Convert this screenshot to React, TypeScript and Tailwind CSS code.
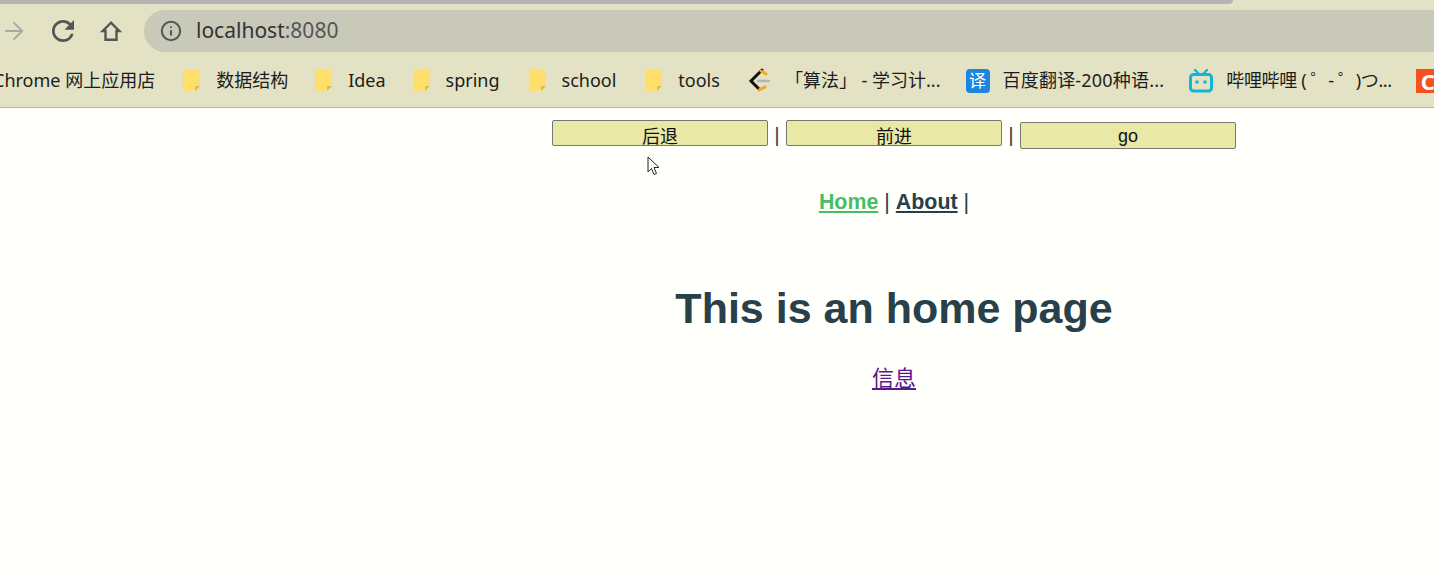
import { ArrowRight, Info } from "lucide-react";

const sans = "font-['Noto_Sans','Noto_Sans_CJK_SC',sans-serif]";
const cjk = "font-['Liberation_Sans','Noto_Sans_CJK_SC',sans-serif]";

function Folder() {
  return (
    <svg width="17" height="21" viewBox="0 0 17 21" className="shrink-0">
      <path d="M1 0h15a1 1 0 0 1 1 1v15l-5 5H1a1 1 0 0 1-1-1V1a1 1 0 0 1 1-1z" fill="#ffdf6c" />
      <path d="M17 16l-5 5v-4a1 1 0 0 1 1-1z" fill="#d9bb55" />
    </svg>
  );
}

function LeetcodeIcon() {
  return (
    <svg width="22" height="26" viewBox="0 0 22 26" className="shrink-0">
      <path d="M14 2L3 13l8 8" fill="none" stroke="#111" strokeWidth="3" strokeLinecap="round" />
      <path d="M13 3l5 3M11 22l6-3" fill="none" stroke="#f5a623" strokeWidth="3" strokeLinecap="round" />
      <path d="M10 13h11" stroke="#b5b5b5" strokeWidth="2.5" strokeLinecap="round" />
    </svg>
  );
}

function BilibiliIcon() {
  return (
    <svg width="24" height="24" viewBox="0 0 24 24" className="shrink-0">
      <path d="M6 1l4 4M18 1l-4 4" stroke="#12b5d6" strokeWidth="2.4" strokeLinecap="round" />
      <rect x="1.5" y="5.5" width="21" height="16.5" rx="3" fill="none" stroke="#12b5d6" strokeWidth="3" />
      <circle cx="8" cy="13" r="1.8" fill="#12b5d6" />
      <circle cx="16" cy="13" r="1.8" fill="#12b5d6" />
    </svg>
  );
}

function Bookmark({
  label,
  icon,
  className,
  textClass = "",
}: {
  label: string;
  icon: React.ReactNode;
  className: string;
  textClass?: string;
}) {
  return (
    <div className={`flex shrink-0 items-center ${className}`}>
      {icon}
      <span className={`whitespace-nowrap text-[18px] text-[#1c1c1c] ${textClass}`}>{label}</span>
    </div>
  );
}

function NavButton({ label, className = "h-[26px] pt-[3px]" }: { label: string; className?: string }) {
  return (
    <button
      type="button"
      className={`w-[216px] rounded-[2px] border border-[#77776f] bg-[#e9e8a6] text-[18px] leading-[26px] text-[#111] ${cjk} ${className}`}
    >
      {label}
    </button>
  );
}

export default function App() {
  return (
    <div className="h-[578px] w-[1434px] overflow-hidden bg-[#fffffb]">
      <div className="bg-[#e3e2c4]">
        <div className="h-[4px] w-[1233px] rounded-br-[8px] bg-[#b4b4b4]" />
        <div className={`flex h-[52px] items-center pt-[2px] ${sans}`}>
          <ArrowRight className="text-[#a9a9a4]" size={28} strokeWidth={1.6} />
          <svg width="22" height="22" viewBox="4 4 16 16" className="ml-[24px] shrink-0 text-[#555]">
            <path
              fill="currentColor"
              d="M17.65 6.35A7.958 7.958 0 0 0 12 4c-4.42 0-7.99 3.58-7.99 8s3.57 8 7.99 8c3.73 0 6.84-2.55 7.73-6h-2.08A5.99 5.99 0 0 1 12 18c-3.31 0-6-2.69-6-6s2.69-6 6-6c1.66 0 3.14.69 4.22 1.78L13 11h7V4l-2.35 2.35z"
            />
          </svg>
          <svg width="22" height="20" viewBox="2 3 20 18" className="ml-[26px] shrink-0 text-[#555]">
            <path d="M12 4.5L4.5 12H7v8h10v-8h2.5z" fill="none" stroke="currentColor" strokeWidth="2.2" strokeLinejoin="miter" />
          </svg>
          <div className="ml-[22px] flex h-[42px] flex-1 items-center rounded-l-full bg-[#c9c9b9] pl-[16px]">
            <Info className="text-[#555]" size={22} strokeWidth={2.2} />
            <span className="ml-[14px] text-[21px] text-[#333]">
              localhost<span className="text-[#555]">:8080</span>
            </span>
          </div>
        </div>
        <div className={`flex h-[52px] items-center overflow-hidden border-b border-[#b4b4aa] pb-[2px] ${sans}`}>
          <span className="-ml-[7px] shrink-0 whitespace-nowrap text-[18px] text-[#1c1c1c]">Chrome 网上应用店</span>
          <Bookmark label="数据结构" icon={<Folder />} className="ml-[28px] gap-[16px]" />
          <Bookmark label="Idea" icon={<Folder />} className="ml-[27px] gap-[16px]" />
          <Bookmark label="spring" icon={<Folder />} className="ml-[27px] gap-[16px]" />
          <Bookmark label="school" icon={<Folder />} className="ml-[29px] gap-[16px]" />
          <Bookmark label="tools" icon={<Folder />} className="ml-[29px] gap-[16px]" />
          <Bookmark label="「算法」 - 学习计..." icon={<LeetcodeIcon />} className="ml-[28px] gap-[15px]" />
          <Bookmark
            label="百度翻译-200种语..."
            icon={
              <span className="flex h-[24px] w-[24px] shrink-0 items-center justify-center rounded-[4px] bg-[#1a86e0] text-[17px] leading-none text-white">
                译
              </span>
            }
            className="ml-[25px] gap-[13px]"
            textClass="tracking-[0.2px]"
          />
          <Bookmark
            label="哔哩哔哩 ( ゜- ゜)つ..."
            icon={<BilibiliIcon />}
            className="ml-[25px] gap-[13px]"
            textClass="tracking-[-0.35px]"
          />
          <span className="ml-[24px] flex h-[24px] w-[24px] shrink-0 items-center justify-center bg-[#f4511e] text-[22px] font-bold leading-none text-white">
            C
          </span>
        </div>
      </div>

      <div className={`relative w-[1788px] text-center text-[#28404a] ${cjk}`}>
        <div className="flex items-start justify-center pt-[12px]">
          <NavButton label="后退" />
          <span className="w-[18px] text-[21px] leading-[30px] text-[#444]">|</span>
          <NavButton label="前进" />
          <span className="w-[18px] text-[21px] leading-[30px] text-[#444]">|</span>
          <NavButton label="go" className="mt-[2px] h-[27px] pb-[8px]" />
        </div>
        <div className="pt-[37px] text-[21.4px] leading-[30px]">
          <a className="font-bold text-[#48bd62] underline">Home</a> | <a className="font-bold underline">About</a> |
        </div>
        <h1 className="pt-[67px] text-[43px] font-bold leading-[48px]">This is an home page</h1>
        <a className="mt-[32px] inline-block text-[22px] leading-[30px] text-[#551a8b] underline">信息</a>
        <svg width="14" height="22" viewBox="0 0 14 22" className="absolute left-[647px] top-[48px]">
          <path d="M1 1v15l3.5-3.5 2.5 6 2.5-1-2.5-6h5z" fill="#fff" stroke="#222" strokeWidth="1" />
        </svg>
      </div>
    </div>
  );
}
